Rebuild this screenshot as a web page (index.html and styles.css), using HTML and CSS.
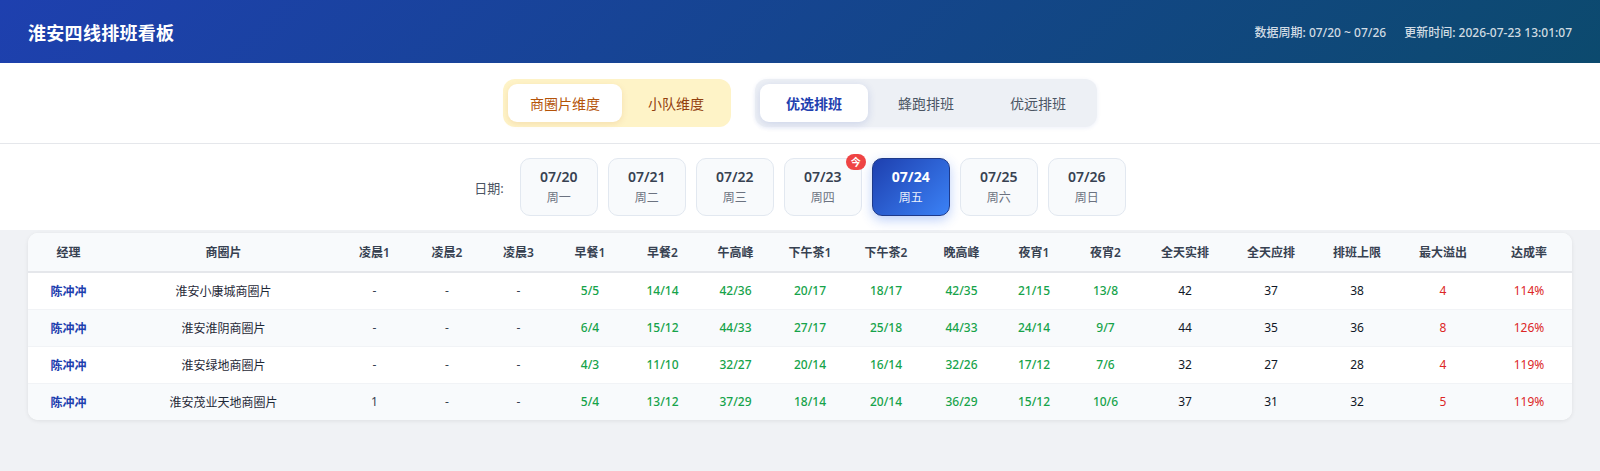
FILE: index.html
```html
<!DOCTYPE html>
<html lang="zh-CN">
<head>
    <meta charset="UTF-8">
    <meta name="viewport" content="width=device-width, initial-scale=1.0">
    <title>淮安四线排班看板</title>
    <link rel="stylesheet" href="styles.css">
</head>
<body>
    <header class="topbar">
        <h1 class="title">淮安四线排班看板</h1>
        <div class="meta">
            <span>数据周期: 07/20 ~ 07/26</span>
            <span>更新时间: 2026-07-23 13:01:07</span>
        </div>
    </header>

    <section class="tabbar">
        <div class="seg seg-dim">
            <button class="seg-btn active">商圈片维度</button>
            <button class="seg-btn">小队维度</button>
        </div>
        <div class="seg seg-mode">
            <button class="seg-btn active">优选排班</button>
            <button class="seg-btn">蜂跑排班</button>
            <button class="seg-btn">优远排班</button>
        </div>
    </section>

    <section class="datebar">
        <span class="date-label">日期:</span>
        <div class="dates">
            <div class="date-card"><div class="d">07/20</div><div class="w">周一</div></div>
            <div class="date-card"><div class="d">07/21</div><div class="w">周二</div></div>
            <div class="date-card"><div class="d">07/22</div><div class="w">周三</div></div>
            <div class="date-card today"><div class="d">07/23</div><div class="w">周四</div><span class="badge">今</span></div>
            <div class="date-card active"><div class="d">07/24</div><div class="w">周五</div></div>
            <div class="date-card"><div class="d">07/25</div><div class="w">周六</div></div>
            <div class="date-card"><div class="d">07/26</div><div class="w">周日</div></div>
        </div>
    </section>

    <main class="content">
        <div class="table-card">
            <table class="sched">
                <colgroup>
                    <col style="width:81px">
                    <col style="width:229px">
                    <col style="width:73px">
                    <col style="width:72px">
                    <col style="width:71px">
                    <col style="width:72px">
                    <col style="width:73px">
                    <col style="width:73px">
                    <col style="width:76px">
                    <col style="width:76px">
                    <col style="width:75px">
                    <col style="width:70px">
                    <col style="width:73px">
                    <col style="width:86px">
                    <col style="width:86px">
                    <col style="width:86px">
                    <col style="width:86px">
                    <col style="width:86px">
                </colgroup>
                <thead>
                    <tr>
                        <th>经理</th><th>商圈片</th><th>凌晨1</th><th>凌晨2</th><th>凌晨3</th>
                        <th>早餐1</th><th>早餐2</th><th>午高峰</th><th>下午茶1</th><th>下午茶2</th>
                        <th>晚高峰</th><th>夜宵1</th><th>夜宵2</th><th>全天实排</th><th>全天应排</th>
                        <th>排班上限</th><th>最大溢出</th><th>达成率</th>
                    </tr>
                </thead>
                <tbody>
                    <tr>
                        <td class="mgr">陈冲冲</td><td class="area">淮安小康城商圈片</td>
                        <td>-</td><td>-</td><td>-</td>
                        <td class="ok">5/5</td><td class="ok">14/14</td><td class="ok">42/36</td><td class="ok">20/17</td>
                        <td class="ok">18/17</td><td class="ok">42/35</td><td class="ok">21/15</td><td class="ok">13/8</td>
                        <td class="num">42</td><td class="num">37</td><td class="num">38</td>
                        <td class="over">4</td><td class="over">114%</td>
                    </tr>
                    <tr>
                        <td class="mgr">陈冲冲</td><td class="area">淮安淮阴商圈片</td>
                        <td>-</td><td>-</td><td>-</td>
                        <td class="ok">6/4</td><td class="ok">15/12</td><td class="ok">44/33</td><td class="ok">27/17</td>
                        <td class="ok">25/18</td><td class="ok">44/33</td><td class="ok">24/14</td><td class="ok">9/7</td>
                        <td class="num">44</td><td class="num">35</td><td class="num">36</td>
                        <td class="over">8</td><td class="over">126%</td>
                    </tr>
                    <tr>
                        <td class="mgr">陈冲冲</td><td class="area">淮安绿地商圈片</td>
                        <td>-</td><td>-</td><td>-</td>
                        <td class="ok">4/3</td><td class="ok">11/10</td><td class="ok">32/27</td><td class="ok">20/14</td>
                        <td class="ok">16/14</td><td class="ok">32/26</td><td class="ok">17/12</td><td class="ok">7/6</td>
                        <td class="num">32</td><td class="num">27</td><td class="num">28</td>
                        <td class="over">4</td><td class="over">119%</td>
                    </tr>
                    <tr>
                        <td class="mgr">陈冲冲</td><td class="area">淮安茂业天地商圈片</td>
                        <td>1</td><td>-</td><td>-</td>
                        <td class="ok">5/4</td><td class="ok">13/12</td><td class="ok">37/29</td><td class="ok">18/14</td>
                        <td class="ok">20/14</td><td class="ok">36/29</td><td class="ok">15/12</td><td class="ok">10/6</td>
                        <td class="num">37</td><td class="num">31</td><td class="num">32</td>
                        <td class="over">5</td><td class="over">119%</td>
                    </tr>
                </tbody>
            </table>
        </div>
    </main>
</body>
</html>
```

FILE: styles.css
```css
* {
    margin: 0;
    padding: 0;
    box-sizing: border-box;
}

body {
    font-family: "Noto Sans", "Noto Sans CJK SC", sans-serif;
    background-color: #f0f2f5;
    color: #1f2937;
    min-height: 100vh;
}

/* top header */
.topbar {
    height: 63px;
    padding: 0 28px;
    display: flex;
    justify-content: space-between;
    align-items: center;
    background: linear-gradient(135deg, #1e40af, #0c4a6e);
}

.title {
    font-size: 18px;
    font-weight: 700;
    color: #fff;
    letter-spacing: 0.3px;
}

.meta {
    display: flex;
    gap: 18px;
    font-size: 12px;
    font-weight: 500;
    color: rgba(255, 255, 255, 0.82);
}

/* view switch */
.tabbar {
    background: #fff;
    padding: 16px 0 16px;
    border-bottom: 1px solid #e5e7eb;
    display: flex;
    justify-content: center;
    gap: 24px;
}

.seg {
    display: flex;
    gap: 4px;
    padding: 5px;
    border-radius: 12px;
}

.seg-btn {
    height: 38px;
    border: none;
    background: transparent;
    border-radius: 9px;
    font-family: inherit;
    font-size: 14px;
    cursor: pointer;
}

.seg-dim {
    background: #fef3c7;
}

.seg-dim .seg-btn {
    padding: 0 22px;
    color: #92400e;
}

.seg-dim .seg-btn.active {
    background: #fff;
    color: #b45309;
    box-shadow: 0 2px 6px rgba(180, 83, 9, 0.12);
}

.seg-mode {
    background: #edf0f5;
    box-shadow: 0 1px 4px rgba(30, 64, 175, 0.08);
}

.seg-mode .seg-btn {
    padding: 0 26px;
    color: #4b5563;
}

.seg-mode .seg-btn.active {
    background: #fff;
    color: #1e40af;
    font-weight: 700;
    box-shadow: 0 2px 8px rgba(30, 64, 175, 0.16);
}

/* date picker */
.datebar {
    background: #fff;
    padding: 14px 0;
    display: flex;
    justify-content: center;
    align-items: center;
}

.date-label {
    font-size: 13px;
    color: #4b5563;
    margin-right: 16px;
}

.dates {
    display: flex;
    gap: 10px;
}

.date-card {
    position: relative;
    width: 78px;
    padding: 8px 0;
    text-align: center;
    background: #f8fafc;
    border: 1px solid #e2e8f0;
    border-radius: 10px;
}

.date-card .d {
    font-size: 14px;
    font-weight: 600;
    line-height: 20px;
    color: #374151;
}

.date-card .w {
    margin-top: 2px;
    font-size: 12px;
    line-height: 18px;
    color: #6b7280;
}

.date-card.active {
    background: linear-gradient(135deg, #1e40af, #3b82f6);
    border-color: #1e3a8a;
    box-shadow: 0 4px 12px rgba(37, 99, 235, 0.3);
}

.date-card.active .d {
    color: #fff;
    font-weight: 700;
}

.date-card.active .w {
    color: rgba(255, 255, 255, 0.92);
}

.badge {
    position: absolute;
    top: -5px;
    right: -5px;
    width: 20px;
    height: 16px;
    border-radius: 8px;
    background: #ef4444;
    color: #fff;
    font-size: 10px;
    font-weight: 700;
    line-height: 16px;
    text-align: center;
}

/* table */
.content {
    padding: 3px 28px 0;
}

.table-card {
    background: #fff;
    border-radius: 10px;
    overflow: hidden;
    box-shadow: 0 1px 4px rgba(0, 0, 0, 0.08);
}

.sched {
    width: 100%;
    table-layout: fixed;
    border-collapse: collapse;
    font-size: 12px;
    text-align: center;
}

.sched th {
    height: 39px;
    background: #f8fafc;
    border-bottom: 2px solid #e5e7eb;
    font-weight: 600;
    color: #374151;
}

.sched td {
    height: 37px;
    border-bottom: 1px solid #f1f3f6;
    color: #374151;
}

.sched tbody tr:nth-child(even) td {
    background: #f8fafc;
}

.sched tbody tr:last-child td {
    border-bottom: none;
}

.sched td.mgr {
    color: #1e40af;
    font-weight: 700;
}

.sched td.area {
    color: #1f2937;
}

.sched td.ok {
    color: #16a34a;
    font-weight: 500;
}

.sched td.num {
    color: #111827;
}

.sched td.over {
    color: #dc2626;
}
```
